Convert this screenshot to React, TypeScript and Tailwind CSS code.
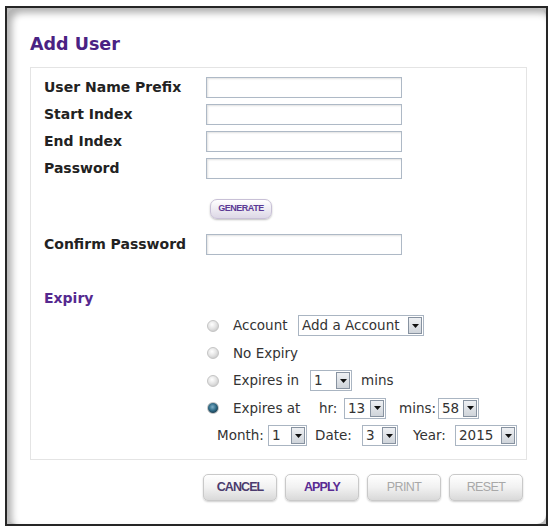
import React from "react";

const FONT = { fontFamily: "'DejaVu Sans', Verdana, sans-serif" };
const BTN_FONT = { fontFamily: "'Liberation Sans', Arial, sans-serif" };

function TextField() {
  return (
    <div className="h-[21px] w-[196px] border border-[#aeb9c6] bg-white shadow-[inset_1px_1px_2px_rgba(0,0,0,0.12)]" />
  );
}

function Dropdown({ value, width }: { value: string; width: number }) {
  return (
    <div
      className="flex h-[21px] items-stretch border border-[#aab5c2] bg-white"
      style={{ width }}
    >
      <span className="flex-1 overflow-hidden whitespace-nowrap pl-[3px] text-[13.5px] leading-[19px] text-[#333]">
        {value}
      </span>
      <span className="m-[1px] flex w-[14px] shrink-0 items-center justify-center border border-[#8792a0] bg-gradient-to-b from-[#eef0f3] to-[#cfd4da]">
        <svg width="7" height="4" viewBox="0 0 7 4">
          <path d="M0 0h7L3.5 4z" fill="#111" />
        </svg>
      </span>
    </div>
  );
}

function Radio({ checked = false }: { checked?: boolean }) {
  return (
    <span
      className={
        "inline-block h-[12px] w-[12px] shrink-0 rounded-full border border-[#c4c4c4] " +
        (checked
          ? "bg-[radial-gradient(circle_at_45%_40%,#7fb0c8_0%,#2f6a86_45%,#1c4458_70%,#c9d3d8_100%)]"
          : "bg-[radial-gradient(circle_at_40%_35%,#ffffff_0%,#e2e2e2_50%,#bdbdbd_100%)]")
      }
    />
  );
}

function Field({ label, children }: { label: string; children?: React.ReactNode }) {
  return (
    <div className="flex h-[21px] items-center">
      <span className="w-[162px] whitespace-nowrap text-[14px] font-bold text-[#222]">{label}</span>
      {children ?? <TextField />}
    </div>
  );
}

function ActionButton({ label, color, disabled = false }: { label: string; color: string; disabled?: boolean }) {
  return (
    <button
      className={
        "h-[27px] w-[74px] rounded-[5px] border border-[#c9c9c9] bg-gradient-to-b from-[#ffffff] via-[#f1f1f1] to-[#d9d9d9] text-[12.5px] shadow-[0_1px_2px_rgba(0,0,0,0.2)] " +
        (disabled ? "font-normal tracking-[-0.6px]" : "font-bold tracking-[-0.9px]")
      }
      style={{ ...BTN_FONT, color }}
    >
      {label}
    </button>
  );
}

export default function App() {
  return (
    <div className="min-h-[531px] w-[553px] bg-white pl-[5px] pt-[6px]" style={FONT}>
      <div className="h-[520px] w-[543px] border-2 border-[#262626] bg-[#bdbdbd]">
        <div className="h-full w-full rounded-[9px] bg-white px-[23px] pt-[25px] shadow-[inset_5px_5px_7px_rgba(0,0,0,0.3)]">
          <h1 className="text-[17.5px] font-bold leading-[23px] text-[#4a2283]">Add User</h1>

          <div className="mt-[11px] h-[393px] w-[497px] border border-[#e4e4e4] pl-[13px] pt-[9px] text-[#333]">
            <div className="flex flex-col gap-[6px]">
              <Field label="User Name Prefix" />
              <Field label="Start Index" />
              <Field label="End Index" />
              <Field label="Password" />
            </div>

            <div className="ml-[166px] mt-[20px] flex h-[20px] w-[62px] items-center justify-center rounded-[7px] border border-[#c8c0d6] bg-gradient-to-b from-[#ffffff] to-[#ddd8e6] shadow-[0_1px_2px_rgba(0,0,0,0.25)]">
              <span className="text-[9px] font-bold tracking-[-0.5px] text-[#5b3a95]" style={BTN_FONT}>
                GENERATE
              </span>
            </div>

            <div className="mt-[15px]">
              <Field label="Confirm Password" />
            </div>

            <div className="mt-[35px] text-[14px] font-bold leading-[16px] text-[#55298f]">Expiry</div>

            <div className="ml-[163px] mt-[9px] flex flex-col gap-[6.5px] text-[13.5px] text-[#333]">
              <div className="flex h-[21px] items-center">
                <Radio />
                <span className="ml-[14px] w-[65px]">Account</span>
                <Dropdown value="Add a Account" width={126} />
              </div>
              <div className="flex h-[21px] items-center">
                <Radio />
                <span className="ml-[14px]">No Expiry</span>
              </div>
              <div className="flex h-[21px] items-center">
                <Radio />
                <span className="ml-[14px] w-[77px]">Expires in</span>
                <Dropdown value="1" width={42} />
                <span className="ml-[9px]">mins</span>
              </div>
              <div className="flex h-[21px] items-center">
                <Radio checked />
                <span className="ml-[14px] w-[86px]">Expires at</span>
                <span className="w-[25px]">hr:</span>
                <Dropdown value="13" width={42} />
                <span className="ml-[13px] w-[39px]">mins:</span>
                <Dropdown value="58" width={41} />
              </div>
              <div className="ml-[10px] flex h-[21px] items-center">
                <span className="w-[51px]">Month:</span>
                <Dropdown value="1" width={39} />
                <span className="ml-[8px] w-[47px]">Date:</span>
                <Dropdown value="3" width={36} />
                <span className="ml-[15px] w-[42px]">Year:</span>
                <Dropdown value="2015" width={62} />
              </div>
            </div>
          </div>

          <div className="ml-[173px] mt-[14px] flex gap-[8px]">
            <ActionButton label="CANCEL" color="#4b3b6e" />
            <ActionButton label="APPLY" color="#5a2b93" />
            <ActionButton label="PRINT" color="#a8a8a8" disabled />
            <ActionButton label="RESET" color="#a8a8a8" disabled />
          </div>
        </div>
      </div>
    </div>
  );
}
